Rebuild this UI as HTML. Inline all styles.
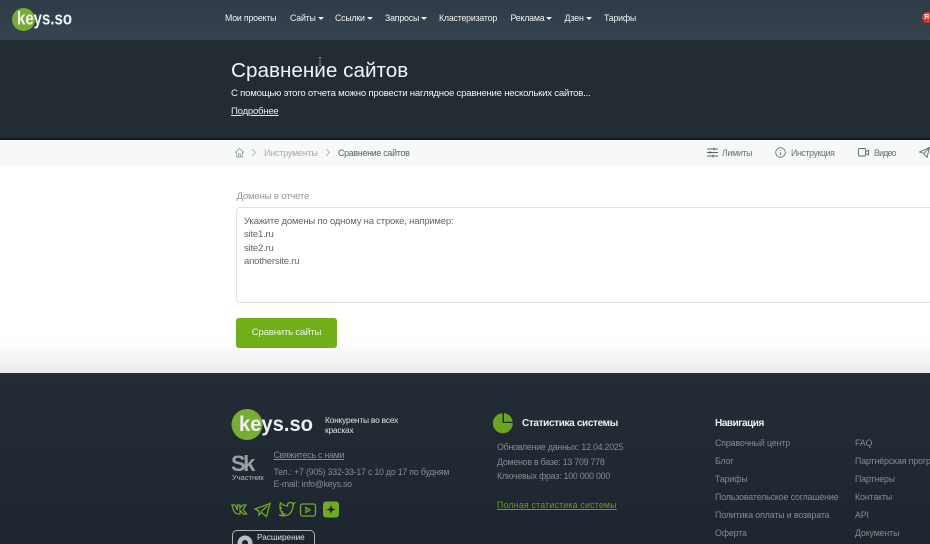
<!DOCTYPE html>
<html lang="ru"><head><meta charset="utf-8"><title>Сравнение сайтов</title>
<style>
html,body{margin:0;padding:0;width:930px;height:544px;overflow:hidden}
body{background:#fff;font-family:"Liberation Sans",sans-serif}
#w{position:relative;width:930px;height:544px;overflow:hidden;background:#fff}
.t{position:absolute;white-space:nowrap;line-height:1}
.a{position:absolute}
.n{top:13px;font-size:8.8px;letter-spacing:-.2px;color:#f0f2f3;line-height:10px}
.n i{display:inline-block;width:0;height:0;border-left:3.2px solid transparent;border-right:3.2px solid transparent;border-top:3.6px solid #f0f2f3;margin-left:2px;vertical-align:1px}
.f{font-size:8.8px;letter-spacing:-.12px;color:#858b92}
.s{letter-spacing:-.22px}
.g{font-size:8.8px;letter-spacing:-.3px;color:#6a7178}
</style></head><body><div id="w">
<div class="a" style="left:0;top:0;width:930px;height:40px;background:linear-gradient(#2e3a47,#38444f)"></div>
<div class="a" style="left:0;top:40px;width:930px;height:98px;background:#232c33"></div>
<div class="a" style="left:0;top:138px;width:930px;height:2px;background:#12181c"></div>
<svg class="a" style="left:0;top:0" width="90" height="36"><circle cx="23.500" cy="19.500" r="11.500" fill="#76ad36"/><text x="17" y="24.500" font-family="Liberation Sans" font-weight="700" font-size="18" textLength="55" lengthAdjust="spacingAndGlyphs" fill="#f2f4f5">keys.so</text></svg>
<div class="t n" style="left:225px">Мои проекты</div>
<div class="t n" style="left:290px">Сайты<i></i></div>
<div class="t n" style="left:335px">Ссылки<i></i></div>
<div class="t n" style="left:385px">Запросы<i></i></div>
<div class="t n" style="left:439px">Кластеризатор</div>
<div class="t n" style="left:510.500px">Реклама<i></i></div>
<div class="t n" style="left:564.500px">Дзен<i></i></div>
<div class="t n" style="left:604px">Тарифы</div>
<div class="a" style="left:922px;top:12px;width:11px;height:11px;border-radius:50%;background:#d8392b;color:#fff;font:700 7px/11px 'Liberation Sans';text-indent:2px">Я</div>
<div class="t" style="left:231px;top:58.500px;font-size:20.700px;line-height:24px;color:#f2f4f5">Сравнение сайтов</div>
<div class="t" style="left:231px;top:88px;font-size:9.600px;letter-spacing:-.22px;line-height:11px;color:#f2f4f5">С помощью этого отчета можно провести наглядное сравнение нескольких сайтов...</div>
<div class="t" style="left:231px;top:106px;font-size:9.600px;letter-spacing:-.25px;line-height:11px;color:#e8eaec;text-decoration:underline">Подробнее</div>
<svg class="a" style="left:318px;top:57px" width="4" height="10"><path d="M.5.500h3M2 .500v8M.5 8.500h3" stroke="#8d949a" fill="none" stroke-width=".8"/></svg>

<div class="a" style="left:0;top:140px;width:930px;height:26px;background:#f7f8f8"></div>
<svg class="a" style="left:234px;top:147px" width="11" height="11" fill="none" stroke="#a0a6ab" stroke-width=".9"><path d="M1 5.500 5.500 1.500 10 5.500M2.500 4.500V10h6V4.500M4.500 10V7h2v3"/></svg>
<svg class="a" style="left:251px;top:148px" width="6" height="9" fill="none" stroke="#b5b9bd"><path d="M1 1l3.500 3.500L1 8"/></svg>
<div class="t g" style="left:264px;top:148.500px;color:#a3a8ad;letter-spacing:-.1px">Инструменты</div>
<svg class="a" style="left:325px;top:148px" width="6" height="9" fill="none" stroke="#b5b9bd"><path d="M1 1l3.500 3.500L1 8"/></svg>
<div class="t g" style="left:338px;top:148.500px;color:#555c63;letter-spacing:-.24px">Сравнение сайтов</div>
<svg class="a" style="left:707px;top:147px" width="11" height="11" fill="none" stroke="#5d646b" stroke-width=".9"><path d="M0 2h11M0 5.500h11M0 9h11M7 .5v3M3 4v3M6 7.500v3"/></svg>
<div class="t g" style="left:722px;top:148.500px">Лимиты</div>
<svg class="a" style="left:775px;top:147px" width="11" height="11" fill="none" stroke="#5d646b" stroke-width=".8"><circle cx="5.500" cy="5.500" r="4.800"/><path d="M5.500 5v3.200M5.500 3v1"/></svg>
<div class="t g" style="left:791px;top:148.500px;letter-spacing:-.38px">Инструкция</div>
<svg class="a" style="left:858px;top:147px" width="11" height="11" fill="none" stroke="#5d646b" stroke-width=".9"><rect x=".5" y="1.500" width="7" height="7.500" rx="1"/><path d="M8 4.500 10.500 3v5L8 6.500"/></svg>
<div class="t g" style="left:874px;top:148.500px;letter-spacing:-.8px">Видео</div>
<svg class="a" style="left:919px;top:147px" width="11" height="11" fill="none" stroke="#5d646b" stroke-width=".9"><path d="M.5 5 10.500.5 8 10.500 5 6.500zM5 6.500 10.500.5"/></svg>

<div class="a" style="left:0;top:340px;width:930px;height:33px;background:linear-gradient(#fff,#ececec)"></div>
<div class="t" style="left:236.500px;top:191px;font-size:9.600px;letter-spacing:-.2px;line-height:11px;color:#92979c">Домены в отчете</div>
<div class="a" style="left:236px;top:207px;width:720px;height:94px;border:1px solid #dfe1e3;border-radius:4px;background:#fff"></div>
<div class="a" style="left:244px;top:214.500px;font-size:9.500px;letter-spacing:-.2px;line-height:13.500px;color:#60666c;white-space:nowrap">Укажите домены по одному на строке, например:<br>site1.ru<br>site2.ru<br>anothersite.ru</div>
<div class="a" style="left:236px;top:318px;width:101px;height:30px;border-radius:3px;background:#70ae1a;color:#eef6e2;font-size:9.600px;letter-spacing:-.2px;line-height:30px;text-align:center">Сравнить сайты</div>

<div class="a" style="left:0;top:373px;width:930px;height:171px;background:linear-gradient(#232c36,#1e252e)"></div>
<svg class="a" style="left:230px;top:405px" width="90" height="38"><circle cx="17" cy="19.500" r="15.500" fill="#76ad36"/><text x="9" y="26" font-family="Liberation Sans" font-weight="700" font-size="21.500" textLength="74" lengthAdjust="spacingAndGlyphs" fill="#eef0f2">keys.so</text></svg>
<div class="t" style="left:325px;top:414.500px;font-size:8.400px;letter-spacing:-.2px;line-height:10px;color:#dfe2e5">Конкуренты во всех<br>красках</div>
<div class="t" style="left:231px;top:452px;font-size:22px;line-height:24px;font-weight:700;letter-spacing:-2.500px;color:#9aa0a6">Sk</div>
<div class="t" style="left:232px;top:473px;font-size:7.500px;line-height:9px;color:#b5bac0">Участник</div>
<div class="t f s" style="left:273.500px;top:451px;text-decoration:underline">Свяжитесь с нами</div>
<div class="t f s" style="left:273.500px;top:467.500px">Тел.: +7 (905) 332-33-17 с 10 до 17 по будням</div>
<div class="t f s" style="left:273.500px;top:479.500px">E-mail: info@keys.so</div>
<svg class="a" style="left:230px;top:500px" width="112" height="20" fill="none" stroke="#6fa82a" stroke-width="1.300">
<path d="M2 5h3l2.500 5V5h2.500v3L13 5h3l-3 4.500 3.500 4.500h-3L10 10.500V14H8C5 14 3 10 2 5z"/>
<path d="M25 9 40 3.500 36.500 16.500 31.500 12.500 29 15V11zM31 11.500 37.500 6"/>
<path d="M49 15c8 3 14-2 14-10l1.500-2-2 .5C61 1.500 57 2.500 57.500 6 55 6 52 4.500 50.500 3c-1 2-.5 4 1 5.500L50 8c0 2 1 3.500 3 4h-1.500c.5 1.300 1.500 2 3 2-1.500 1-3.500 1.300-5.500 1z"/>
<rect x="70.500" y="4" width="15" height="12" rx="2"/><path d="M76 7.500v5l4-2.500z"/>
<rect x="93" y="1.500" width="16" height="16" rx="3" fill="#6fa82a" stroke="none"/><path d="M101 4.500c.5 3.500 1.500 4.500 5 5-3.500.5-4.500 1.500-5 5-.5-3.500-1.500-4.500-5-5 3.500-.5 4.500-1.500 5-5z" fill="#1e252e" stroke="none"/>
</svg>
<div class="a" style="left:232px;top:530px;width:81px;height:24px;border:1px solid #aeb3b8;border-radius:5px"></div>
<svg class="a" style="left:236.500px;top:535px" width="16" height="9"><circle cx="8" cy="8" r="7.500" fill="#b9bec3"/><circle cx="8" cy="8" r="3" fill="#1e252e"/></svg>
<div class="t" style="left:257px;top:534px;font-size:8.200px;color:#dfe2e5">Расширение</div>

<svg class="a" style="left:493px;top:413px" width="21" height="21"><path d="M9.500 .3V10H19.800A10 10 0 1 1 9.500 .3z" fill="#6ea322"/><path d="M11 .3a9 9 0 0 1 8.500 8.500H11z" fill="#6ea322"/></svg>
<div class="t" style="left:522px;top:417.500px;font-size:10px;line-height:11px;font-weight:700;color:#eceef0;letter-spacing:-.35px">Статистика системы</div>
<div class="t f s" style="left:497px;top:443px">Обновление данных: 12.04.2025</div>
<div class="t f s" style="left:497px;top:457.500px">Доменов в базе: 13 709 778</div>
<div class="t f s" style="left:497px;top:472px">Ключевых фраз: 100 000 000</div>
<div class="t f" style="left:497px;top:501px;color:#659a25;letter-spacing:.2px;text-decoration:underline">Полная статистика системы</div>
<div class="t" style="left:715px;top:417.500px;font-size:10px;line-height:11px;font-weight:700;color:#eceef0;letter-spacing:-.45px">Навигация</div>
<div class="t f" style="left:715px;top:439px">Справочный центр</div>
<div class="t f" style="left:715px;top:457px">Блог</div>
<div class="t f" style="left:715px;top:475px">Тарифы</div>
<div class="t f" style="left:715px;top:493px">Пользовательское соглашение</div>
<div class="t f" style="left:715px;top:511px">Политика оплаты и возврата</div>
<div class="t f" style="left:715px;top:529px">Оферта</div>
<div class="t f" style="left:855px;top:439px">FAQ</div>
<div class="t f" style="left:855px;top:457px">Партнёрская программа</div>
<div class="t f" style="left:855px;top:475px">Партнеры</div>
<div class="t f" style="left:855px;top:493px">Контакты</div>
<div class="t f" style="left:855px;top:511px">API</div>
<div class="t f" style="left:855px;top:529px">Документы</div>
</div></body></html>
